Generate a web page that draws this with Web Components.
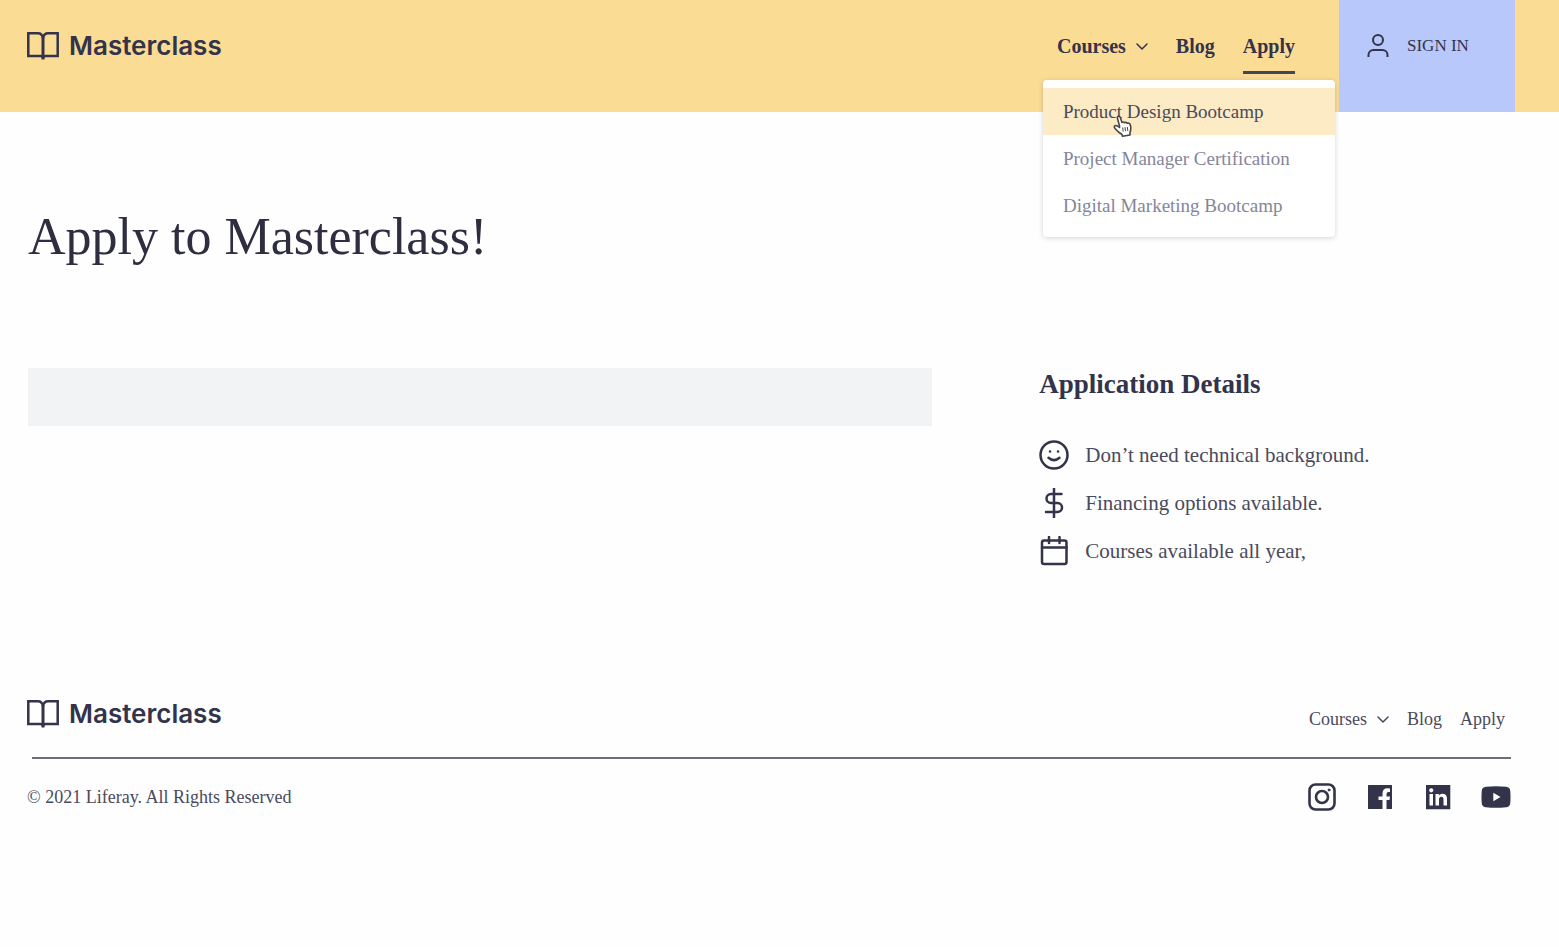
<!DOCTYPE html>
<html lang="en">
<head>
<meta charset="utf-8">
<meta name="viewport" content="width=device-width, initial-scale=1">
<title>Apply to Masterclass</title>
<style>
  html { --ink: #33334a; --body-ink: #4a4a5c; --brand: #fbdc95; --accent: #b8c8fb; }
  body { margin: 0; background: #fefefe; color: var(--ink); font-family: "Liberation Serif", serif; }
</style>
</head>
<body>
<masterclass-page></masterclass-page>
<script>
const define = (name, html) => {
  const template = document.createElement('template');
  template.innerHTML = html;
  customElements.define(name, class extends HTMLElement {
    constructor() {
      super();
      this.attachShadow({ mode: 'open' }).append(template.content.cloneNode(true));
    }
  });
};

const stroke = (w, body, box = '0 0 24 24') =>
  `<svg viewBox="${box}" fill="none" stroke="currentColor" stroke-width="${w}" stroke-linecap="round" stroke-linejoin="round" aria-hidden="true">${body}</svg>`;
const fill = (body, box) => `<svg viewBox="${box}" fill="currentColor" aria-hidden="true">${body}</svg>`;
const ICONS = {
  book: `<svg viewBox="0 0 32 28" fill="none" stroke="currentColor" stroke-width="2.500" aria-hidden="true"><path d="M16 6Q15 1.300 11 1.300H1.300V24H13.500Q16 24 16 26.500Q16 24 18.500 24H30.700V1.300H21Q17 1.300 16 6Z"/><path d="M16 5V27.500" stroke-width="3"/></svg>`,
  chevron: stroke(1.5, '<path d="M1 1l5 5 5-5"/>', '0 0 12 7'),
  user: `<svg viewBox="0 0 22 24" fill="none" stroke="currentColor" stroke-width="2" aria-hidden="true"><circle cx="11" cy="6" r="5"/><path d="M1.500 23V21a5 5 0 0 1 5-5h9a5 5 0 0 1 5 5v2"/></svg>`,
  smile: stroke(2.5, '<circle cx="15" cy="15" r="13.500"/><path d="M9.500 17.800Q15 22.500 20.500 17.800"/><path d="M11 11.500h.1M19 11.500h.1"/>', '0 0 30 30'),
  dollar: stroke(2.5, '<path d="M15 0.500V29.500M22.500 6H12a4.500 4.500 0 0 0 0 9h6.500a4.500 4.500 0 0 1 0 9H7"/>', '0 0 30 30'),
  calendar: stroke(2.5, '<rect x="3" y="4.500" width="24.500" height="23.500" rx="2"/><path d="M3 11.500h24.500M10 1v6M20.500 1v6"/>', '0 0 30 30'),
  instagram: stroke(2.6, '<rect x="2.500" y="2.500" width="25" height="25" rx="6"/><circle cx="15" cy="15" r="6"/><circle cx="22" cy="8" r="1" fill="currentColor" stroke-width="1"/>', '0 0 30 30'),
  facebook: fill('<path d="M3.500 3H26.500Q27 3 27 3.500V26.500Q27 27 26.500 27H21.500V18H24.500L25 14.500H21.500V12Q21.500 10 23.500 10H25V6.500Q17.500 5.200 17.500 11.500V14.500H13.500V18H17.500V27H3.500Q3 27 3 26.500V3.500Q3 3 3.500 3Z"/>', '0 0 30 30'),
  linkedin: fill('<path fill-rule="evenodd" d="M3 3H27.300V27.300H3ZM6.500 12V23.500H10V12ZM8.250 6.200a2.100 2.100 0 1 0 .01 0ZM12.500 12V23.500H16V17.500Q16 14.800 18.300 14.800T20.500 17.500V23.500H24V16.800Q24 11.700 19.300 11.700Q17 11.700 15.900 13.500V12Z"/>', '0 0 30 30'),
  youtube: fill('<path fill-rule="evenodd" d="M5 4.700Q15 3.700 25 4.700Q29 5 29.300 9Q29.800 15 29.300 21Q29 25 25 25.300Q15 26.300 5 25.300Q1 25 .7 21Q.2 15 .7 9Q1 5 5 4.700ZM12.300 10.800V19.200L19.500 15Z"/>', '0 0 30 30'),
  pointer: `<svg viewBox="0 0 19 22" fill="#fff" stroke="#4a4542" stroke-width="1.600" stroke-linejoin="round" aria-hidden="true"><path d="M6.500 11L4.500 3.500Q4 1.500 5.300 1.200T7.300 2.500L9 7.500Q10.300 6.300 11.500 7.700Q13 6.700 14.300 8.300Q16.800 7.500 17.500 10.500Q18.300 14 17 17.500V20L9.500 21.200L9 19.500Q5.500 17.500 2 13.500Q.6 11.500 2 10.700T6.500 12.500Z"/><path d="M9.700 12.500l.5 4M12 12.200l.5 4M14.300 12l.5 4" stroke-width="1"/></svg>`
};

customElements.define('ui-icon', class extends HTMLElement {
  connectedCallback() {
    if (this.shadowRoot) return;
    this.attachShadow({ mode: 'open' }).innerHTML =
      `<style>:host{display:inline-flex;flex:none}svg{display:block;width:100%;height:100%}</style>${ICONS[this.getAttribute('name')]}`;
  }
});

define('brand-logo', `
<style>
  :host { display: block; }
  a { display: flex; align-items: center; gap: 10px; color: inherit; text-decoration: none;
      font: 600 26px/32px Inter, sans-serif; }
  ui-icon { width: 32px; height: 28px; }
</style>
<a href="#"><ui-icon name="book"></ui-icon><span>Masterclass</span></a>`);

define('course-option', `
<style>
  :host { display: block; }
  a { display: block; padding: 0 20px; font-size: 19px; line-height: 47px; color: #85859a;
      text-decoration: none; white-space: nowrap; }
  :host([active]) a { background: #fcebc4; color: var(--body-ink); }
</style>
<a href="#" role="menuitem"><slot></slot></a>`);

define('courses-menu', `
<style>
  :host { display: block; position: relative; }
  button { display: flex; align-items: center; gap: 10px; padding: 0; border: 0; background: none;
           color: inherit; font: inherit; cursor: pointer; }
  .chevron { width: 12px; height: 7px; }
  .panel { position: absolute; z-index: 2; top: 50px; left: -14px; width: 292px; box-sizing: border-box;
           padding: 8px 0; background: #fff; border-radius: 4px; font-weight: 400;
           box-shadow: 0 1px 5px rgb(40 40 60 / 20%); }
  .pointer { position: absolute; top: 35px; left: 70px; width: 19px; height: 22px; }
</style>
<button type="button" aria-haspopup="menu" aria-expanded="true">Courses <ui-icon class="chevron" name="chevron"></ui-icon></button>
<div class="panel" role="menu">
  <course-option active>Product Design Bootcamp</course-option>
  <course-option>Project Manager Certification</course-option>
  <course-option>Digital Marketing Bootcamp</course-option>
  <ui-icon class="pointer" name="pointer"></ui-icon>
</div>`);

define('site-header', `
<style>
  :host { display: flex; justify-content: space-between; min-height: 112px; padding: 0 44px 0 27px;
          box-sizing: border-box; background: var(--brand); }
  brand-logo { padding-top: 30px; }
  .right { display: flex; gap: 44px; }
  nav { display: flex; align-items: flex-start; gap: 28px; padding-top: 30px; font-weight: 700;
        font-size: 20px; line-height: 32px; }
  nav a { color: inherit; text-decoration: none; }
  nav a[aria-current] { padding-bottom: 9px; border-bottom: 3px solid #45455a; }
  .sign-in { display: flex; align-items: flex-start; gap: 18px; width: 176px; box-sizing: border-box;
             padding: 30px 0 0 28px; background: var(--accent); color: var(--ink); font-size: 17px;
             line-height: 32px; text-decoration: none; text-transform: uppercase; }
  .sign-in ui-icon { width: 22px; height: 24px; margin-top: 4px; }
</style>
<brand-logo></brand-logo>
<div class="right">
  <nav aria-label="Main">
    <courses-menu></courses-menu>
    <a href="#">Blog</a>
    <a href="#" aria-current="page">Apply</a>
  </nav>
  <a class="sign-in" href="#"><ui-icon name="user"></ui-icon><span>Sign in</span></a>
</div>`);

define('detail-item', `
<style>
  :host { display: flex; align-items: center; gap: 16px; min-height: 32px; color: var(--body-ink);
          font-size: 21px; line-height: 32px; }
  ::slotted(ui-icon) { width: 30px; height: 30px; color: var(--ink); }
</style>
<slot name="icon"></slot><span><slot></slot></span>`);

define('application-details', `
<style>
  :host { display: block; }
  h2 { margin: 0 0 39px; font-size: 27px; line-height: 32px; }
  .list { display: grid; gap: 16px; }
</style>
<h2>Application Details</h2>
<div class="list" role="list">
  <detail-item role="listitem"><ui-icon slot="icon" name="smile"></ui-icon>Don’t need technical background.</detail-item>
  <detail-item role="listitem"><ui-icon slot="icon" name="dollar"></ui-icon>Financing options available.</detail-item>
  <detail-item role="listitem"><ui-icon slot="icon" name="calendar"></ui-icon>Courses available all year,</detail-item>
</div>`);

define('site-footer', `
<style>
  :host { display: block; padding: 0 48px 0 27px; }
  .row { display: flex; align-items: center; justify-content: space-between; }
  nav { display: flex; gap: 18px; padding: 10px 6px 0 0; color: var(--body-ink); font-size: 18px; line-height: 24px; }
  a { color: inherit; text-decoration: none; }
  button { display: flex; align-items: center; gap: 10px; padding: 0; border: 0; background: none; color: inherit; font: inherit; }
  button ui-icon { width: 12px; height: 7px; }
  hr { height: 2px; margin: 26px 0 22px 5px; border: 0; background: #6d6d7c; }
  small { color: var(--body-ink); font-size: 18px; line-height: 32px; }
  .social { display: flex; gap: 28px; }
  .social a, .social ui-icon { display: block; width: 30px; height: 30px; }
</style>
<div class="row">
  <brand-logo></brand-logo>
  <nav aria-label="Footer">
    <button type="button">Courses <ui-icon name="chevron"></ui-icon></button>
    <a href="#">Blog</a>
    <a href="#">Apply</a>
  </nav>
</div>
<hr>
<div class="row">
  <small>© 2021 Liferay. All Rights Reserved</small>
  <div class="social">
    <a href="#" aria-label="Instagram"><ui-icon name="instagram"></ui-icon></a>
    <a href="#" aria-label="Facebook"><ui-icon name="facebook"></ui-icon></a>
    <a href="#" aria-label="LinkedIn"><ui-icon name="linkedin"></ui-icon></a>
    <a href="#" aria-label="YouTube"><ui-icon name="youtube"></ui-icon></a>
  </div>
</div>`);

define('masterclass-page', `
<style>
  :host { display: block; }
  main { padding: 93px 48px 130px 28px; }
  h1 { margin: 0 0 99px; font-size: 52px; line-height: 64px; font-weight: 400; color: #2e2e40; }
  .columns { display: grid; grid-template-columns: 23fr 12fr; column-gap: 107px; align-items: start; }
  .form { min-height: 58px; background: #f1f3f5; }
</style>
<site-header></site-header>
<main>
  <h1>Apply to Masterclass!</h1>
  <div class="columns">
    <div class="form"></div>
    <application-details></application-details>
  </div>
</main>
<site-footer></site-footer>`);
</script>
</body>
</html>
